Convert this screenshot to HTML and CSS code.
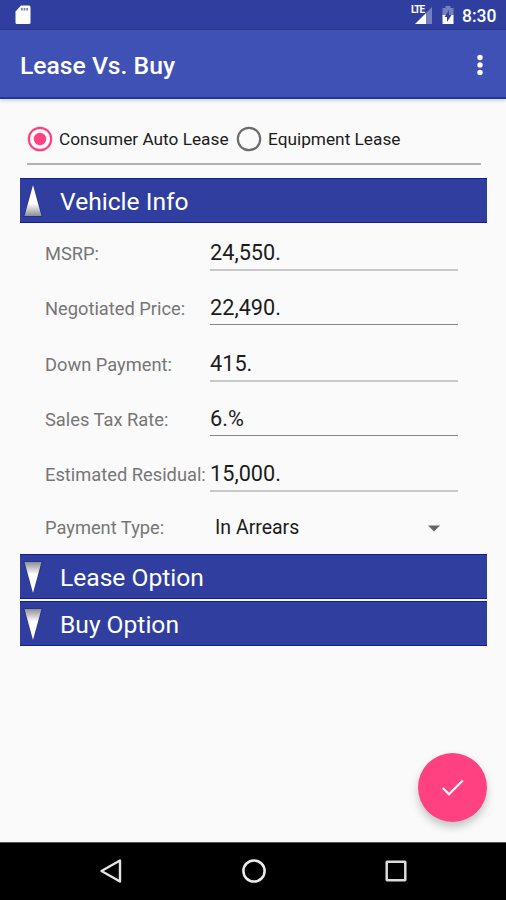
FILE: index.html
```html
<!DOCTYPE html>
<html lang="en">
<head>
<meta charset="utf-8">
<title>Lease Vs. Buy</title>
<link rel="stylesheet" href="styles.css">
</head>
<body>
<div class="screen">
  <header class="status">
    <svg class="sd" width="16" height="20" viewBox="0 0 16 20"><path fill="#fff" d="M6 .5H14Q15.500 .5 15.500 2V17.500Q15.500 19 14 19H2Q.5 19 .5 17.500V6.500Z"/><path stroke="#7680bf" stroke-width="1.800" d="M6.800 3v2.500M9.500 3v2.500M12.200 3v2.500"/></svg>
    <span class="spacer"></span>
    <span class="signal"><span class="lte">LTE</span><svg width="23" height="20" viewBox="0 0 23 20"><path fill="#7580bf" d="M22 2V19H16V8Z"/><path fill="#fff" d="M16 8V19H5Z"/></svg></span>
    <svg class="battery" width="12" height="20" viewBox="0 0 12 20"><path fill="#7580bf" d="M3.500 1h5v2H11.500V11H.5V3h3z"/><path fill="#fff" d="M.5 10h11v9H.5z"/><path fill="#303f9f" d="M7 5 2.500 12H5v5l4.500-7H7z"/></svg>
    <span class="clock">8:30</span>
  </header>
  <div class="appbar">
    <h1>Lease Vs. Buy</h1>
    <svg width="8" height="24" viewBox="0 0 8 24"><g fill="#fff"><circle cx="4" cy="4.500" r="2.700"/><circle cx="4" cy="12" r="2.700"/><circle cx="4" cy="19.500" r="2.700"/></g></svg>
  </div>
  <main>
    <div class="radios">
      <svg width="26" height="26" viewBox="0 0 26 26"><circle cx="13" cy="13" r="11.200" fill="none" stroke="#ff4081" stroke-width="2.200"/><circle cx="13" cy="13" r="6.200" fill="#ff4081"/></svg>
      <span class="choice first">Consumer Auto Lease</span>
      <svg width="26" height="26" viewBox="0 0 26 26"><circle cx="13" cy="13" r="11.200" fill="none" stroke="#6c6c6c" stroke-width="2.200"/></svg>
      <span class="choice second">Equipment Lease</span>
    </div>
    <section class="bar">
      <svg width="20" height="36" viewBox="0 0 20 36"><defs><linearGradient id="up" x1="0" y1="0" x2="0" y2="1"><stop offset=".6" stop-color="#fff"/><stop offset="1" stop-color="#8d8d94"/></linearGradient></defs><path fill="#25338c" d="M10 1 20 34H0z"/><path fill="url(#up)" d="M10 2 18.500 33H1.500z"/></svg>
      <h2>Vehicle Info</h2>
    </section>
    <div class="fields">
      <div class="field"><label>MSRP:</label><span class="value">24,550.</span></div>
      <div class="field"><label>Negotiated Price:</label><span class="value dark">22,490.</span></div>
      <div class="field"><label>Down Payment:</label><span class="value">415.</span></div>
      <div class="field"><label>Sales Tax Rate:</label><span class="value dark">6.%</span></div>
      <div class="field"><label>Estimated Residual:</label><span class="value">15,000.</span></div>
      <div class="picker"><label>Payment Type:</label><span class="selected">In Arrears</span><svg width="12" height="7" viewBox="0 0 12 7"><path fill="#666" d="M0 .5H12L6 6.500z"/></svg></div>
    </div>
    <section class="bar">
      <svg width="20" height="36" viewBox="0 0 20 36"><defs><linearGradient id="down" x1="0" y1="0" x2="0" y2="1"><stop offset="0" stop-color="#8d8d94"/><stop offset=".4" stop-color="#fff"/></linearGradient></defs><path fill="#25338c" d="M10 35 0 2H20z"/><path fill="url(#down)" d="M10 34 1.500 3H18.500z"/></svg>
      <h2>Lease Option</h2>
    </section>
    <section class="bar last">
      <svg width="20" height="36" viewBox="0 0 20 36"><path fill="#25338c" d="M10 35 0 2H20z"/><path fill="url(#down)" d="M10 34 1.500 3H18.500z"/></svg>
      <h2>Buy Option</h2>
    </section>
    <div class="fab"><svg width="24" height="20" viewBox="0 0 24 20"><path fill="none" stroke="#fff" stroke-width="2.200" d="M1.800 10 8 16.200 21.800 2.500"/></svg></div>
  </main>
  <nav>
    <svg width="24" height="26" viewBox="0 0 24 26"><path fill="none" stroke="#e4e4e4" stroke-width="2.400" stroke-linejoin="round" d="M21 2.500V23.500L2.500 13z"/></svg>
    <svg width="26" height="26" viewBox="0 0 26 26"><circle cx="13" cy="13" r="10.600" fill="none" stroke="#ececec" stroke-width="2.500"/></svg>
    <svg width="24" height="24" viewBox="0 0 24 24"><rect x="2.700" y="2.700" width="18.600" height="18.600" rx=".5" fill="none" stroke="#dadada" stroke-width="2.500"/></svg>
  </nav>
</div>
</body>
</html>
```
FILE: styles.css
```css
* { box-sizing: border-box; }
body { margin: 0; font-family: Roboto, sans-serif; color: #1c1c1c; background: #fafafa; }
svg { display: block; flex: none; }
h1, h2 { margin: 0; white-space: nowrap; }
.screen { width: 506px; height: 900px; display: flex; flex-direction: column; overflow: hidden; }
.status { height: 30px; flex: none; display: flex; align-items: center; padding: 1px 9px 0 15px; background: #303f9f; border-bottom: 1px solid #2c3a8e; color: #fff; }
.spacer { flex: 1; }
.signal { position: relative; margin-right: 9px; }
.lte { position: absolute; left: 1px; top: 0; font-size: 10px; line-height: 10px; font-weight: 700; letter-spacing: -1px; }
.battery { margin-right: 8px; }
.clock { width: 35px; font-size: 17.5px; font-weight: 500; line-height: 28px; padding-top: 2px; }
.appbar { height: 69px; flex: none; display: flex; align-items: center; justify-content: space-between; padding: 2px 22px 0 20px; background: #3f51b5; border-bottom: 2px solid #183aa0; color: #fff; box-shadow: 0 1px 4px rgba(0,0,0,.22); }
h1 { font-size: 24.7px; font-weight: 500; padding-top: 2px; }
main { flex: 1; position: relative; padding: 15px 19px 0 20px; }
.radios { height: 51px; margin: 0 6px 13px 7px; border-bottom: 2px solid #b1b1b1; display: flex; align-items: center; }
.choice { font-size: 17.25px; white-space: nowrap; }
.first { width: 170px; margin: 0 7px 0 6px; }
.second { margin-left: 6px; }
.radios svg:first-child { margin-left: 0; }
.bar { height: 45px; display: flex; align-items: center; gap: 17px; padding-left: 3px; background: #303f9f; border: 1px solid #10209a; border-width: 1px 0; color: #fff; }
.last { margin-top: 2px; }
.bar h2 { font-size: 24.6px; font-weight: 400; line-height: 43px; padding-top: 2px; }
.fields { height: 331px; padding: 0 29px 0 25px; }
.field { height: 55.3px; display: flex; }
label { width: 165px; flex: none; white-space: nowrap; color: #767676; font-size: 18.3px; line-height: 62px; }
.value { height: 48px; flex: 1; border-bottom: 2px solid #c8c8c8; font-size: 21.7px; line-height: 60px; }
.value.dark { height: 47px; border-bottom: 1px solid #858585; }
.picker { height: 55px; display: flex; align-items: center; padding-top: 3px; }
.selected { padding-left: 5px; flex: 1; font-size: 19.5px; line-height: 56px; }
.picker label { line-height: 56px; }
.picker svg { margin-right: 18px; }
.fab { position: absolute; right: 19px; top: 654px; width: 69px; height: 69px; border-radius: 50%; background: #ff4081; display: grid; place-items: center; box-shadow: 0 5px 8px rgba(0,0,0,.22); }
nav { height: 58px; flex: none; border-top: 1px solid #555; background: #000; display: flex; align-items: center; justify-content: space-between; padding: 0 98px 2px 99px; }
```
